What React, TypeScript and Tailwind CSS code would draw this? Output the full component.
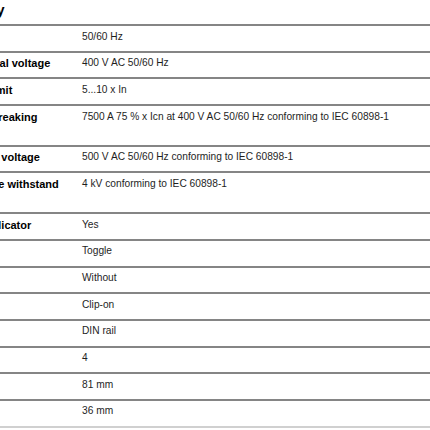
import React from 'react';

type Spec = { label: string; value: string };

const specs: Spec[] = [
  { label: 'Network frequency', value: '50/60 Hz' },
  { label: '[Ue] rated operational voltage', value: '400 V AC 50/60 Hz' },
  { label: 'Magnetic tripping limit', value: '5...10 x In' },
  {
    label: '[Ics] rated service breaking capacity',
    value: '7500 A 75 % x Icn at 400 V AC 50/60 Hz conforming to IEC 60898-1',
  },
  { label: '[Ui] rated insulation voltage', value: '500 V AC 50/60 Hz conforming to IEC 60898-1' },
  { label: '[Uimp] rated impulse withstand voltage', value: '4 kV conforming to IEC 60898-1' },
  { label: 'Contact position indicator', value: 'Yes' },
  { label: 'Control type', value: 'Toggle' },
  { label: 'Local signalling', value: 'Without' },
  { label: 'Mounting mode', value: 'Clip-on' },
  { label: 'Mounting support', value: 'DIN rail' },
  { label: '9 mm pitches', value: '4' },
  { label: 'Height', value: '81 mm' },
  { label: 'Width', value: '36 mm' },
];

const App: React.FC = () => {
  return (
    <div className="w-[430px] h-[430px] overflow-hidden bg-white font-['Liberation_Sans',Arial,sans-serif]">
      {/* the sheet is scrolled right, so the label column runs off the left edge */}
      <div className="w-[535px] -ml-[105px]">
        <div className="h-[26px] pt-[2px] border-b-2 border-[#858585]">
          <h2 className="text-[14.5px] leading-[17px] font-bold text-black">Complementary</h2>
        </div>
        {specs.map((spec, index) => {
          const isLast = index === specs.length - 1;
          return (
            <div
              key={spec.label}
              className={`grid grid-cols-[187px_1fr] pt-[3.5px] pb-[7.2px] border-b-2 ${
                isLast ? 'border-[#d0d0d0]' : 'border-[#858585]'
              }`}
            >
              <div className="pr-[10px] text-[11px] leading-[14px] font-bold text-black">{spec.label}</div>
              <div className="text-[10.2px] leading-[14px] text-[#1e1e1e]">{spec.value}</div>
            </div>
          );
        })}
      </div>
    </div>
  );
};

export default App;
